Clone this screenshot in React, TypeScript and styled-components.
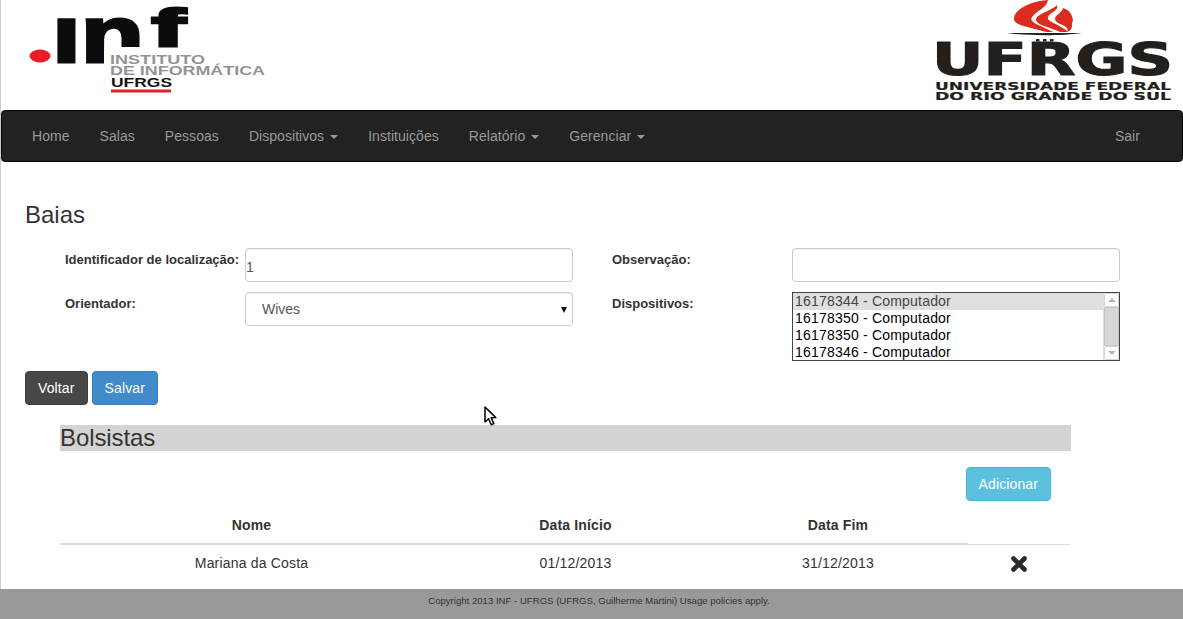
import styled, { createGlobalStyle } from 'styled-components';

const GlobalStyle = createGlobalStyle`
  html, body {
    margin: 0;
    padding: 0;
    height: 100%;
    background: #fff;
    overflow: hidden;
  }

  body {
    font-family: 'Liberation Sans', Arial, sans-serif;
    font-size: 14px;
    line-height: 20px;
    color: #333;
  }
`;

const menu = [
  { label: 'Home' },
  { label: 'Salas' },
  { label: 'Pessoas' },
  { label: 'Dispositivos', caret: true },
  { label: 'Instituições' },
  { label: 'Relatório', caret: true },
  { label: 'Gerenciar', caret: true },
];

const devices = ['16178344', '16178350', '16178350', '16178346'];

function InfLogo() {
  return (
    <svg width='280' height='110' viewBox='0 0 280 110'>
      <ellipse cx='39' cy='56' rx='10.5' ry='6.5' fill='#ec1c24' />
      <text
        x='51'
        y='61.5'
        fontFamily='Liberation Sans'
        fontWeight='700'
        fontSize='80'
        textLength='92'
        lengthAdjust='spacingAndGlyphs'
        fill='#0c0c0c'
        stroke='#0c0c0c'
        strokeWidth='3'
      >
        ın
      </text>
      <rect x='103' y='47' width='48' height='18' fill='#fff' />
      <text
        x='151'
        y='46'
        fontFamily='Liberation Sans'
        fontWeight='700'
        fontSize='51'
        textLength='33'
        lengthAdjust='spacingAndGlyphs'
        fill='#0c0c0c'
        stroke='#0c0c0c'
        strokeWidth='3'
      >
        f
      </text>
      <g fontFamily='Liberation Sans' fontWeight='700' fontSize='12.5'>
        <text x='109' y='63.5' textLength='95' lengthAdjust='spacingAndGlyphs' fill='#939393'>
          INSTITUTO
        </text>
        <text x='109' y='74.5' textLength='155' lengthAdjust='spacingAndGlyphs' fill='#939393'>
          DE INFORMÁTICA
        </text>
        <text x='110' y='86.5' textLength='61' lengthAdjust='spacingAndGlyphs' fill='#111'>
          UFRGS
        </text>
      </g>
      <rect x='110' y='89.5' width='60' height='3' fill='#e3202a' />
    </svg>
  );
}

function UfrgsLogo() {
  return (
    <svg width='260' height='110' viewBox='0 0 260 110'>
      <g fill='#dc2b1f'>
        <path d='M125 0 C110 1 92 8 91 18 C90 26 108 27 123 32 L130 32 C120 26 105 23 109 17 C113 11 124 8 125 0 Z' />
        <path d='M134 5 C130 10 114 14 113 19 C112 25 127 27 137 32 L145 32 C139 25 123 22 125 17 C127 12 136 11 134 5 Z' />
        <path d='M140 8 C139 13 132 15 132 19 C132 23 139 24 143 27 C145 29 145 31 144 32 C151 30 148 24 150 20 C149 15 147 10 140 8 Z' />
      </g>
      <path d='M84 33 L159 33 C140 36 103 36 84 33 Z' fill='#222' />
      <g fill='#2a2623'>
        <rect x='113' y='39' width='3.5' height='2.5' />
        <rect x='120' y='39' width='3.5' height='2.5' />
        <rect x='127' y='39' width='3.5' height='2.5' />
      </g>
      <text
        x='9'
        y='75'
        fontFamily='DejaVu Sans'
        fontWeight='700'
        fontSize='44'
        textLength='241'
        lengthAdjust='spacingAndGlyphs'
        fill='#231f1c'
        stroke='#231f1c'
        strokeWidth='1.2'
      >
        UFRGS
      </text>
      <g fontFamily='DejaVu Sans' fontWeight='700' fontSize='11' fill='#231f1c' stroke='#231f1c' strokeWidth='0.2'>
        <text x='12' y='89.5' textLength='236' lengthAdjust='spacingAndGlyphs'>
          UNIVERSIDADE FEDERAL
        </text>
        <text x='12' y='100' textLength='236' lengthAdjust='spacingAndGlyphs'>
          DO RIO GRANDE DO SUL
        </text>
      </g>
    </svg>
  );
}

function RemoveIcon() {
  return (
    <svg width='16' height='16' viewBox='0 0 16 16'>
      <path d='M2.5 2.5 L13.5 13.5 M13.5 2.5 L2.5 13.5' stroke='#2b2b2b' strokeWidth='4.6' strokeLinecap='round' />
    </svg>
  );
}

export default function App() {
  return (
    <>
      <GlobalStyle />
      <Page>
        <Content>
          <Header>
            <InfLogo />
            <UfrgsLogo />
          </Header>

          <Navbar>
            {menu.map((item) => (
              <NavLink key={item.label}>
                {item.label}
                {item.caret && <Caret />}
              </NavLink>
            ))}
            <NavLink $right>Sair</NavLink>
          </Navbar>

          <Main>
            <Title>Baias</Title>

            <FormGrid>
              <FieldLabel>Identificador de localização:</FieldLabel>
              <TextField type='text' defaultValue='1' />
              <Spacer />
              <FieldLabel>Observação:</FieldLabel>
              <TextField type='text' />

              <FieldLabel>Orientador:</FieldLabel>
              <SelectBox>
                <SelectField defaultValue='Wives'>
                  <option>Wives</option>
                </SelectField>
              </SelectBox>
              <Spacer />
              <FieldLabel>Dispositivos:</FieldLabel>
              <ListBox>
                <ListOptions>
                  {devices.map((code, i) => (
                    <ListOption key={i} $selected={i === 0}>
                      {code} - Computador
                    </ListOption>
                  ))}
                </ListOptions>
                <ListScroll>
                  <ScrollButton>
                    <ScrollArrow $up />
                  </ScrollButton>
                  <ScrollThumb />
                  <ScrollButton>
                    <ScrollArrow />
                  </ScrollButton>
                </ListScroll>
              </ListBox>
            </FormGrid>

            <Actions>
              <Button $bg='#474747' $border='#3f3f3f'>
                Voltar
              </Button>
              <Button $bg='#428bca' $border='#357ebd'>
                Salvar
              </Button>
            </Actions>

            <Section>
              <SectionTitle>Bolsistas</SectionTitle>
              <SectionActions>
                <Button $bg='#5bc0de' $border='#46b8da'>
                  Adicionar
                </Button>
              </SectionActions>
              <Table>
                <colgroup>
                  <col width='383' />
                  <col width='265' />
                  <col width='260' />
                  <col width='102' />
                </colgroup>
                <thead>
                  <tr>
                    <Th>Nome</Th>
                    <Th>Data Início</Th>
                    <Th>Data Fim</Th>
                    <BlankTh />
                  </tr>
                </thead>
                <tbody>
                  <tr>
                    <Td>Mariana da Costa</Td>
                    <Td>01/12/2013</Td>
                    <Td>31/12/2013</Td>
                    <Td>
                      <RemoveIcon />
                    </Td>
                  </tr>
                </tbody>
              </Table>
            </Section>
          </Main>
        </Content>

        <Footer>Copyright 2013 INF - UFRGS (UFRGS, Guilherme Martini) Usage policies apply.</Footer>

        <Pointer width='14' height='22' viewBox='0 0 14 22'>
          <path
            d='M1 1 L1 16 L4.6 12.8 L7.2 18.8 L9.8 17.6 L7.2 11.8 L11.8 11.6 Z'
            fill='#fff'
            stroke='#000'
            strokeWidth='1.5'
            strokeLinejoin='round'
          />
        </Pointer>
      </Page>
    </>
  );
}

const Page = styled.div`
  position: relative;
  display: flex;
  flex-direction: column;
  height: 100vh;
  overflow: hidden;
`;

const Content = styled.div`
  flex: 1;
  min-height: 0;
  overflow: hidden;
  border-left: 1px solid #ccc;
`;

const Header = styled.header`
  display: flex;
  justify-content: space-between;
  height: 110px;
`;

const Navbar = styled.nav`
  display: flex;
  align-items: center;
  box-sizing: border-box;
  height: 52px;
  padding: 0 27px 0 15px;
  background: #222;
  border: 1px solid #080808;
  border-radius: 4px;
`;

const NavLink = styled.a<{ $right?: boolean }>`
  padding: 15px;
  color: #999;
  letter-spacing: 0.05px;
  margin-left: ${({ $right }) => ($right ? 'auto' : '0')};
`;

const Caret = styled.span`
  display: inline-block;
  margin-left: 6px;
  vertical-align: middle;
  border-top: 4px solid #999;
  border-left: 4px solid transparent;
  border-right: 4px solid transparent;
`;

const Main = styled.main`
  padding: 40px 0 0 24px;
`;

const Title = styled.h2`
  margin: 0 0 20px;
  font-size: 24px;
  font-weight: 500;
  line-height: 26px;
`;

const FormGrid = styled.div`
  display: grid;
  grid-template-columns: 180px 328px 39px 180px 328px;
  grid-auto-rows: min-content;
  row-gap: 10px;
  margin-left: 40px;
`;

const FieldLabel = styled.label`
  padding-top: 2px;
  font-size: 13px;
  font-weight: 700;
`;

const Spacer = styled.div``;

const TextField = styled.input`
  box-sizing: border-box;
  width: 328px;
  height: 34px;
  padding: 3px 0 0 0;
  font-family: inherit;
  font-size: 14px;
  color: #555;
  background: #fff;
  border: 1px solid #ccc;
  border-radius: 4px;
  box-shadow: inset 0 1px 1px rgba(0, 0, 0, 0.075);
  outline: none;
`;

const SelectBox = styled.div`
  position: relative;
  width: 328px;
  height: 34px;

  &::after {
    content: '';
    position: absolute;
    top: 15px;
    right: 6px;
    border-top: 6px solid #111;
    border-left: 3.5px solid transparent;
    border-right: 3.5px solid transparent;
    pointer-events: none;
  }
`;

const SelectField = styled.select`
  appearance: none;
  box-sizing: border-box;
  width: 100%;
  height: 100%;
  padding: 6px 16px;
  font-family: inherit;
  font-size: 14px;
  color: #555;
  background: #fff;
  border: 1px solid #ccc;
  border-radius: 4px;
  box-shadow: inset 0 1px 1px rgba(0, 0, 0, 0.075);
  outline: none;
`;

const ListBox = styled.div`
  display: flex;
  box-sizing: border-box;
  width: 328px;
  height: 69px;
  background: #fff;
  border: 1px solid #444;
  overflow: hidden;
`;

const ListOptions = styled.div`
  flex: 1;
  min-width: 0;
`;

const ListOption = styled.div<{ $selected?: boolean }>`
  height: 17px;
  padding: 0 2px;
  line-height: 17px;
  letter-spacing: 0.2px;
  color: ${({ $selected }) => ($selected ? '#444' : '#000')};
  background: ${({ $selected }) => ($selected ? '#e0dfdd' : 'transparent')};
`;

const ListScroll = styled.div`
  display: flex;
  flex-direction: column;
  width: 15px;
  background: #fff;
  border-left: 1px solid #ddd;
`;

const ScrollButton = styled.div`
  display: flex;
  align-items: center;
  justify-content: center;
  height: 14px;
  box-sizing: border-box;
  border: 1px solid #d6d6d6;
  border-radius: 2px;
`;

const ScrollArrow = styled.span<{ $up?: boolean }>`
  border-left: 4px solid transparent;
  border-right: 4px solid transparent;
  border-top: ${({ $up }) => ($up ? '0' : '4px solid #b5b5b5')};
  border-bottom: ${({ $up }) => ($up ? '4px solid #b5b5b5' : '0')};
`;

const ScrollThumb = styled.div`
  flex: 1;
  background: #d8d7d5;
  border: 1px solid #c6c5c3;
`;

const Actions = styled.div`
  display: flex;
  gap: 4px;
  margin-top: 10px;
`;

const Button = styled.button<{ $bg: string; $border: string }>`
  box-sizing: border-box;
  height: 34px;
  padding: 6px 12px;
  font-family: inherit;
  font-size: 14px;
  line-height: 20px;
  letter-spacing: 0.12px;
  color: #fff;
  background: ${({ $bg }) => $bg};
  border: 1px solid ${({ $border }) => $border};
  border-radius: 4px;
`;

const Section = styled.section`
  width: 1011px;
  margin: 20px 0 0 35px;
`;

const SectionTitle = styled.h2`
  margin: 0;
  height: 26px;
  font-size: 24px;
  font-weight: 500;
  line-height: 26px;
  letter-spacing: -0.1px;
  background: #d3d3d3;
`;

const SectionActions = styled.div`
  display: flex;
  justify-content: flex-end;
  padding: 16px 20px 6px 0;
`;

const Table = styled.table`
  width: 1010px;
  table-layout: fixed;
  border-collapse: collapse;
`;

const Th = styled.th`
  padding: 8px;
  font-weight: 700;
  letter-spacing: 0.15px;
  text-align: center;
  border-bottom: 2px solid #ddd;
`;

const BlankTh = styled.th`
  padding: 8px;
`;

const Td = styled.td`
  padding: 8px;
  letter-spacing: 0.18px;
  text-align: center;
  vertical-align: middle;
  border-top: 1px solid #ddd;

  svg {
    display: block;
    margin: 1px auto -1px;
  }
`;

const Footer = styled.footer`
  flex: none;
  height: 30px;
  padding-left: 15px;
  font-size: 9.6px;
  line-height: 24px;
  text-align: center;
  color: #333;
  background: #999;
`;

const Pointer = styled.svg`
  position: absolute;
  left: 484px;
  top: 406px;
`;
